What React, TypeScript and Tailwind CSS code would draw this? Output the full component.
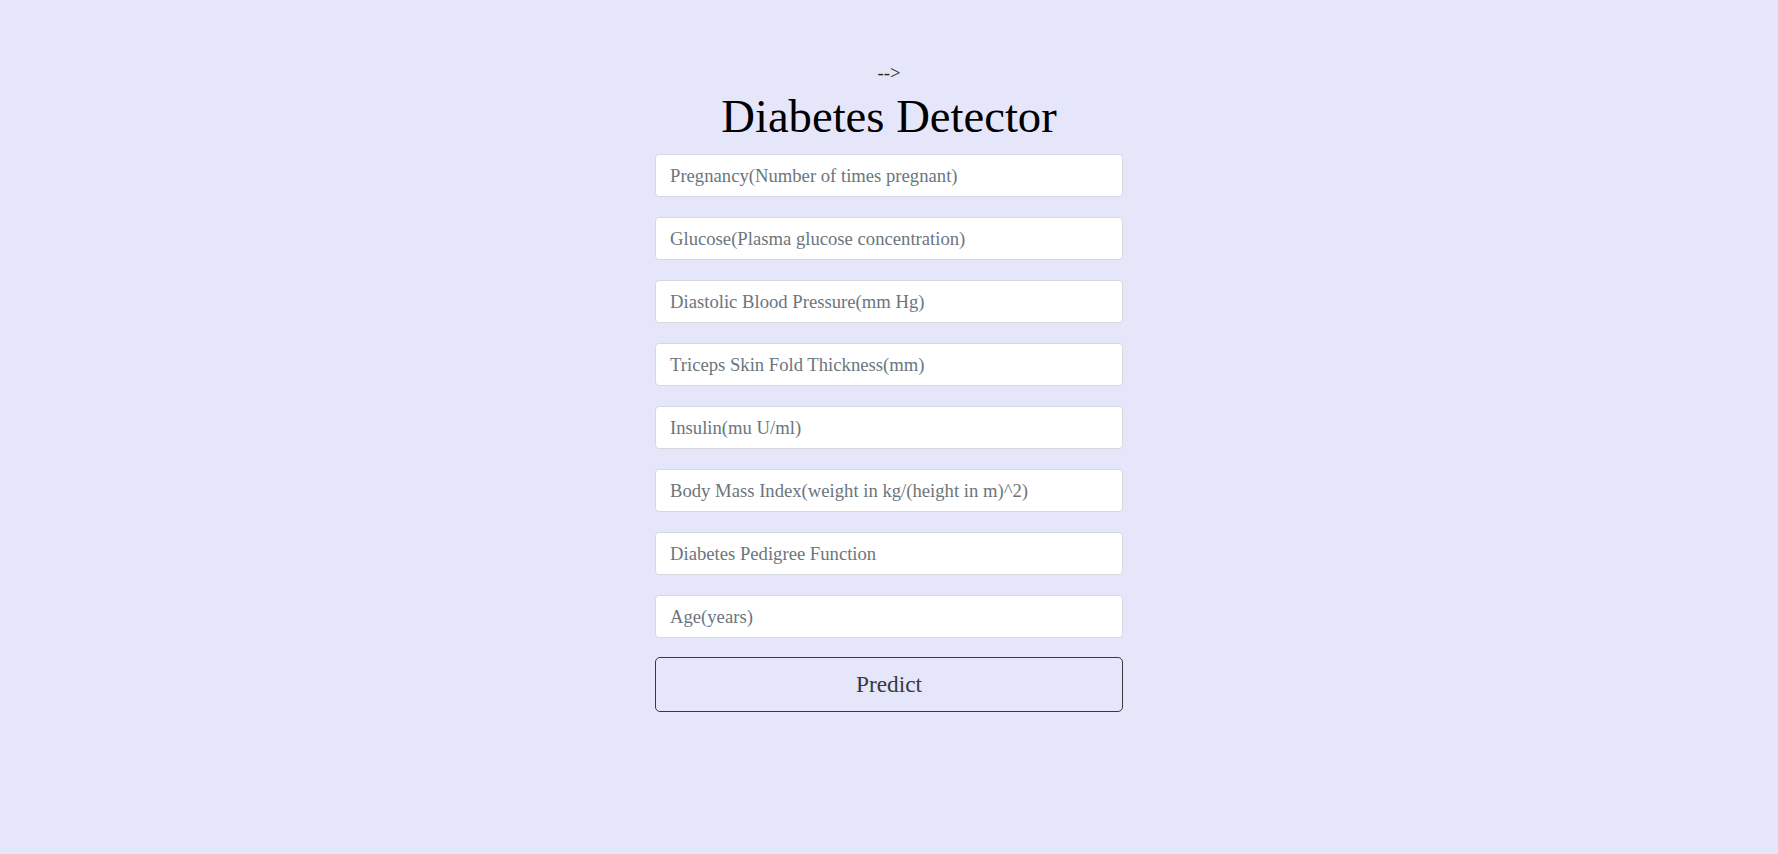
const fields = [
  "Pregnancy(Number of times pregnant)",
  "Glucose(Plasma glucose concentration)",
  "Diastolic Blood Pressure(mm Hg)",
  "Triceps Skin Fold Thickness(mm)",
  "Insulin(mu U/ml)",
  "Body Mass Index(weight in kg/(height in m)^2)",
  "Diabetes Pedigree Function",
  "Age(years)",
]

export default function App() {
  return (
    <div className="min-h-screen bg-[#e6e6fa] font-['Liberation_Serif',serif] text-[18.67px] flex flex-col items-center">
      <div className="mt-[62px] leading-[21px] text-[#222]">--&gt;</div>
      <h1 className="mt-[7px] text-[46.67px] leading-[52px] text-black">Diabetes Detector</h1>

      {/* form */}
      <form className="mt-[12px] w-[468px] flex flex-col gap-[20px]" onSubmit={(e) => e.preventDefault()}>
        {fields.map((f) => (
          <input
            key={f}
            type="text"
            placeholder={f}
            className="h-[43px] w-full bg-white border border-[#d6d8e0] rounded-[4px] px-[14px] text-[18.67px] text-[#495057] placeholder:text-[#6c757d] focus:outline-none"
          />
        ))}
        <button
          type="submit"
          className="mt-[-1px] h-[55px] w-full border border-[#343a40] rounded-[5px] bg-transparent text-[23.33px] text-[#343a40]"
        >
          Predict
        </button>
      </form>
    </div>
  )
}
